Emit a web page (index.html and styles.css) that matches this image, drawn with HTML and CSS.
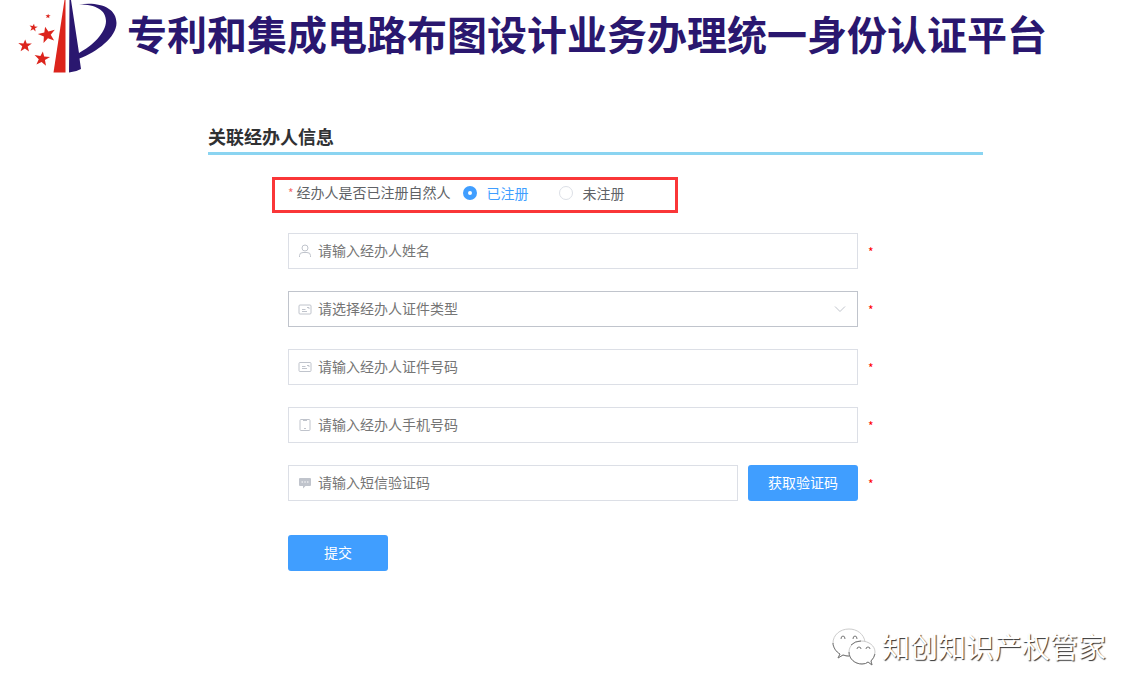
FILE: index.html
```
<!DOCTYPE html>
<html lang="zh-CN">
<head>
<meta charset="utf-8">
<meta name="viewport" content="width=device-width, initial-scale=1">
<title>专利和集成电路布图设计业务办理统一身份认证平台</title>
<link rel="stylesheet" href="styles.css">
</head>
<body>
<header class="site-header">
  <svg class="logo" viewBox="0 0 118 74" aria-hidden="true">
    <defs><path id="star" d="M0-9 2.400-3 10-3.200 4 1.400 6.200 8.500 0 4.400-6.200 8.500-4 1.400-10-3.200-2.400-3Z"/></defs>
    <g fill="#dc241c">
      <path d="M64.500 0H65.500V72.500H53.500Z"/>
      <use href="#star" transform="translate(48 16) rotate(5) scale(.26)"/>
      <use href="#star" transform="translate(33.500 27.500) rotate(8) scale(.42)"/>
      <use href="#star" transform="translate(47 34.500) rotate(-14) scale(.88)"/>
      <use href="#star" transform="translate(25 45.500) rotate(2) scale(.68)"/>
      <use href="#star" transform="translate(42 58.500) rotate(7) scale(.78)"/>
    </g>
    <path fill="#2a176f" d="M69.500 0H71L79 53C92 46 106 33 106 21C106 10 96 4.500 79 4.500C98 1.500 116.500 7 116.500 23C116.500 37 97 52 79.500 58.500L81 69Q76 72 69 72.500Z"/>
  </svg>
  <h1 class="site-title">专利和集成电路布图设计业务办理统一身份认证平台</h1>
</header>

<main class="content">
  <h2 class="section-title">关联经办人信息</h2>
  <form class="agent-form">
    <fieldset class="registered" aria-labelledby="registered-label">
      <div class="registered-row">
        <span class="registered-label" id="registered-label"><span class="mark">*</span>经办人是否已注册自然人</span>
        <label class="choice"><input class="radio" type="radio" name="registered" checked><span>已注册</span></label>
        <label class="choice"><input class="radio" type="radio" name="registered"><span>未注册</span></label>
      </div>
    </fieldset>

    <div class="row">
      <div class="field">
        <svg class="icon" viewBox="0 0 14 14" aria-hidden="true"><circle cx="7" cy="4" r="3"/><path d="M1.500 13V11.500Q1.500 8.500 5 8.500H9Q12.500 8.500 12.500 11.500V13"/></svg>
        <input class="control" type="text" placeholder="请输入经办人姓名" aria-label="经办人姓名">
      </div>
      <span class="required">*</span>
    </div>

    <div class="row">
      <div class="field">
        <svg class="icon" viewBox="0 0 14 14" aria-hidden="true"><rect x="1" y="3" width="12" height="9" rx="1"/><path d="M4 7.500H7.500M4 9.500H9M9 5.500H11V7"/></svg>
        <select class="control control-active" aria-label="经办人证件类型"><option>请选择经办人证件类型</option></select>
        <svg class="arrow" viewBox="0 0 14 14" aria-hidden="true"><path d="M2 4.500 7 9.500 12 4.500"/></svg>
      </div>
      <span class="required">*</span>
    </div>

    <div class="row">
      <div class="field">
        <svg class="icon" viewBox="0 0 14 14" aria-hidden="true"><rect x="1" y="2.500" width="12" height="9" rx="1"/><path d="M4 6.500H7.500M4 8.500H9M9 5.500H11V7"/></svg>
        <input class="control" type="text" placeholder="请输入经办人证件号码" aria-label="经办人证件号码">
      </div>
      <span class="required">*</span>
    </div>

    <div class="row">
      <div class="field">
        <svg class="icon" viewBox="0 0 14 14" aria-hidden="true"><rect x="2" y="1.500" width="10" height="11" rx="1"/><path d="M5 2.500H9M6 10.500H8"/></svg>
        <input class="control" type="tel" placeholder="请输入经办人手机号码" aria-label="经办人手机号码">
      </div>
      <span class="required">*</span>
    </div>

    <div class="row">
      <div class="field">
        <svg class="icon" viewBox="0 0 14 14" aria-hidden="true"><path class="bubble" d="M2 2H12Q13 2 13 3V9Q13 10 12 10H7.500L5 12.500V10H2Q1 10 1 9V3Q1 2 2 2Z"/><path class="dots" d="M3.500 6H5M6.300 6H7.800M9 6H10.500"/></svg>
        <input class="control" type="text" placeholder="请输入短信验证码" aria-label="短信验证码">
        <button class="button" type="button">获取验证码</button>
      </div>
      <span class="required">*</span>
    </div>

    <div class="actions"><button class="button submit" type="submit">提交</button></div>
  </form>
</main>

<footer class="watermark">
  <svg class="chat-logo" viewBox="0 0 46 40" aria-hidden="true">
    <path class="chat-back" d="M18 2C9 2 2 8 2 16C2 20 5 25 9 27L7 31L12 28Q16 30 21 29C31 28 34 22 34 15C33 7 26 2 18 2Z"/>
    <path class="chat-front" d="M30 14C23 14 18 19 18 25C18 32 24 37 31 37Q35 37 37 35L41 38L40 34Q44 30 44 25C44 19 38 14 30 14Z"/>
    <path class="chat-shade" d="M2 16C2 20 5 25 9 27L7 31L12 28Q15 29 18 29M18 25C18 32 24 37 31 37Q35 37 37 35L41 38L40 34Q43 31 44 27M20 18Q24 14 30 14"/>
    <path class="chat-shade" d="M10 12Q10 9 12 9Q14 9 14 12M22 12Q22 9 24 9Q26 9 26 12M26 22Q26 20 28 20Q30 20 30 22M35 22Q35 20 37 20Q39 20 39 22"/>
  </svg>
  <span>知创知识产权管家</span>
</footer>
</body>
</html>
```
FILE: styles.css
```
* { box-sizing: border-box; }

body {
  margin: 0;
  background: #fff;
  color: #606266;
  font: 14px/20px "Noto Sans CJK SC", sans-serif;
}

.site-header {
  display: flex;
  align-items: flex-start;
  gap: 9px;
}

.logo { flex: none; width: 118px; height: 74px; }

.site-title {
  margin: 0;
  color: #2a176f;
  font-size: 40px;
  font-weight: 700;
  line-height: 66px;
  white-space: nowrap;
}

.content { margin: 48px 161px 0 208px; }

.section-title {
  margin: 0;
  padding-bottom: 2px;
  border-bottom: 3px solid #8ad4f1;
  color: #303133;
  font-size: 18px;
  font-weight: 700;
  line-height: 28px;
}

.agent-form {
  display: flex;
  flex-direction: column;
  gap: 22px;
  padding: 22px 110px 0 80px;
}

.registered {
  width: 406px;
  margin: 0 0 -2px -16px;
  padding: 2px 13px;
  border: 3px solid #fa3638;
}

.registered-row {
  display: flex;
  align-items: center;
  height: 26px;
  padding-bottom: 5px;
}

.registered-label { margin-right: 12px; }
.mark { margin-right: 3px; color: #f56c6c; font-size: 12px; }

.choice {
  display: flex;
  align-items: center;
  gap: 10px;
  margin-right: 30px;
}

.choice:has(:checked) { color: #409eff; }

.radio {
  width: 14px;
  height: 14px;
  margin: 0;
  border: 1px solid #dcdfe6;
  border-radius: 50%;
  background: #fff;
  appearance: none;
}

.radio:checked { border: 5px solid #409eff; }

.row {
  display: grid;
  grid-template-columns: 1fr 5px;
  align-items: center;
  column-gap: 10px;
}

.field {
  position: relative;
  display: flex;
  gap: 10px;
}

.control {
  flex: 1;
  min-width: 0;
  height: 36px;
  padding: 0 29px 2px;
  border: 1px solid #dcdfe6;
  border-radius: 0;
  outline: 0;
  background: #fff;
  color: #757575;
  font: inherit;
  appearance: none;
}

.control::placeholder { color: #757575; }
.control-active { border-color: #c0c4cc; }

.icon, .arrow {
  position: absolute;
  top: 11px;
  width: 14px;
  height: 14px;
  fill: none;
  stroke: #c0c4cc;
  pointer-events: none;
}

.icon { left: 10px; }
.arrow { right: 11px; }
.bubble { fill: #c0c4cc; stroke: none; }
.dots { stroke: #fff; }

.required { padding-top: 2px; color: #f00; font-size: 12px; }

.button {
  width: 110px;
  height: 36px;
  padding: 0 0 2px;
  border: 0;
  border-radius: 3px;
  background: #409eff;
  color: #fff;
  font: inherit;
  cursor: pointer;
}

.actions { padding-top: 12px; }
.submit { width: 100px; }

.watermark {
  display: flex;
  align-items: center;
  justify-content: flex-end;
  gap: 5px;
  margin-top: 56px;
  padding-right: 38px;
  color: #fff;
  font-size: 28px;
  line-height: 38px;
  text-shadow: 1px 1px 1px #333;
}

.watermark span { padding-bottom: 2px; }

.chat-logo { width: 46px; height: 40px; }
.chat-back, .chat-front { fill: #fff; stroke: #ccc; }
.chat-shade { fill: none; stroke: #777; }
```
